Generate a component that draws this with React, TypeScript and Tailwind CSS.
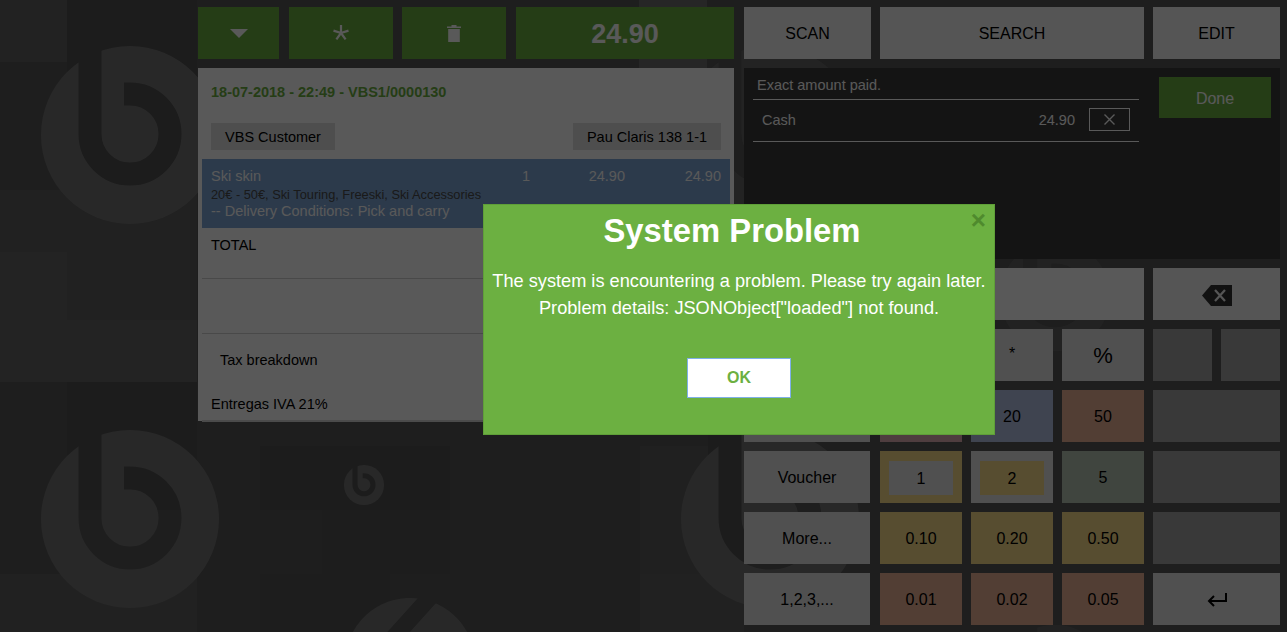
const tiles = [
  [0, 0, 67, 62, '#626262'],
  [0, 62, 67, 128, '#585858'],
  [67, 0, 130, 190, '#505050'],
  [0, 190, 197, 62, '#5e5e5e'],
  [0, 252, 67, 130, '#646464'],
  [67, 252, 130, 68, '#5e5e5e'],
  [67, 320, 130, 62, '#646464'],
  [0, 382, 67, 192, '#585858'],
  [67, 382, 130, 128, '#525252'],
  [67, 510, 130, 64, '#585858'],
  [0, 574, 197, 58, '#606060'],
  [260, 446, 190, 64, '#525252'],
  [322, 510, 128, 64, '#545454'],
  [260, 574, 130, 58, '#545454'],
  [450, 430, 190, 202, '#565656'],
  [640, 446, 68, 128, '#5c5c5c'],
  [640, 574, 104, 58, '#606060'],
  [708, 430, 36, 144, '#525252'],
  [639, 0, 68, 68, '#6e6e6e'],
  [197, 0, 442, 68, '#565656'],
];

const logos = [
  [130, 135, 1, 0, '#747474'],
  [130, 519, 1, 0, '#747474'],
  [364, 485, 0.225, 0, '#747474'],
  [770, 519, 1, 0, '#747474'],
  [770, 135, 1, 0, '#666666'],
  [410, 663, 0.73, 42, '#747474'],
  [1055, 296, 0.62, 0, '#626262'],
  [1055, 680, 0.62, 0, '#626262'],
];

function Background() {
  return (
    <svg className="absolute inset-0" width="1287" height="632" viewBox="0 0 1287 632">
      <defs>
        <mask id="logo-cut" maskUnits="userSpaceOnUse" x="-120" y="-120" width="240" height="240">
          <rect x="-120" y="-120" width="240" height="240" fill="#fff" />
          <path d="M-40 -120V-1A40 40 0 1 0 0 -41H-6" fill="none" stroke="#000" strokeWidth="23" />
        </mask>
      </defs>
      {tiles.map(([x, y, w, h, fill]) => (
        <rect key={`${x}-${y}`} x={x} y={y} width={w} height={h} fill={fill as string} />
      ))}
      {logos.map(([x, y, scale, angle, fill]) => (
        <g key={`${x}-${y}`} transform={`translate(${x} ${y}) rotate(${angle}) scale(${scale})`}>
          <circle r="89" fill={fill as string} mask="url(#logo-cut)" />
        </g>
      ))}
    </svg>
  );
}

function GreenButton({ className, children }: { className: string; children: React.ReactNode }) {
  return <div className={`flex h-[52px] items-center justify-center bg-[#6cb041] text-white ${className}`}>{children}</div>;
}

function TopActions() {
  return (
    <div className="flex h-[52px]">
      <GreenButton className="w-[81px]">
        <svg width="18" height="10" viewBox="0 0 18 10"><path d="M0 1H18L9 10Z" fill="currentColor" /></svg>
      </GreenButton>
      <GreenButton className="ml-[10px] w-[104px]">
        <svg width="18" height="18" viewBox="0 0 18 18" fill="none" stroke="currentColor" strokeWidth="2.2">
          <path d="M9 9V1M9 9L1.5 6.6M9 9L16.5 6.6M9 9L4.4 15.4M9 9L13.6 15.4" />
        </svg>
      </GreenButton>
      <GreenButton className="ml-[9px] w-[104px]">
        <svg width="14" height="17" viewBox="0 0 14 17" fill="currentColor">
          <path d="M4.5 0H9.5V1.5H14V3H0V1.5H4.5ZM1.2 4H12.8V17H1.2Z" />
        </svg>
      </GreenButton>
      <GreenButton className="ml-[10px] w-[218px] pt-[2px] text-[27px] font-bold">24.90</GreenButton>
    </div>
  );
}

function Receipt() {
  return (
    <div className="mt-[9px] h-[353px] bg-white text-[14.5px] text-black">
      <div className="flex h-[55px] items-end pb-[19px] pl-[13px] font-bold text-[#6cb041]">18-07-2018 - 22:49 - VBS1/0000130</div>
      <div className="flex justify-between px-[13px]">
        <div className="flex h-[27px] w-[124px] items-center justify-center bg-[#dfdfdf] pt-[2px]">VBS Customer</div>
        <div className="flex h-[27px] w-[148px] items-center justify-center bg-[#dfdfdf] pt-[2px]">Pau Claris 138 1-1</div>
      </div>
      <div className="mx-[4px] mt-[9px] h-[69px] bg-[#7ea6d6] px-[9px] pt-[9px] text-white">
        <div className="flex h-[18px] items-center">
          <span className="w-[275px]">Ski skin</span>
          <span className="w-[44px] text-right">1</span>
          <span className="w-[95px] text-right">24.90</span>
          <span className="w-[96px] text-right">24.90</span>
        </div>
        <div className="mt-[1px] h-[16px] text-[12.8px] leading-[16px] text-[#4a4a4a]">20€ - 50€, Ski Touring, Freeski, Ski Accessories</div>
        <div className="h-[16px] leading-[16px]">-- Delivery Conditions: Pick and carry</div>
      </div>
      <div className="mx-[4px] h-[51px] border-b border-[#d0d0d0] px-[9px] pt-[8px] leading-[18px]">TOTAL</div>
      <div className="mx-[4px] h-[55px] border-b border-[#d0d0d0]" />
      <div className="flex h-[53px] items-center pl-[22px]">Tax breakdown</div>
      <div className="mx-[4px] h-[35px] border-b-2 border-[#d8d8d8] px-[9px] pt-[8px] leading-[18px]">Entregas IVA 21%</div>
    </div>
  );
}

function Key({ children, className = 'bg-[#e5e5e5]' }: { children?: React.ReactNode; className?: string }) {
  return <div className={`flex h-[52px] items-center justify-center pt-[2px] text-base text-black ${className}`}>{children}</div>;
}

const yellow = 'bg-[#f9dc89]';
const brown = 'bg-[#eab194]';
const muted = 'bg-[#a3a3a3]';

function Keypad() {
  return (
    <div className="mt-[9px] grid grid-cols-[127px_82px_82px_82px_127px] gap-x-[9px] gap-y-[9px]">
      <Key className="w-[126px] bg-[#e5e5e5]" />
      <Key />
      <Key className="bg-[#e5e5e5] pb-[4px]">*</Key>
      <Key className="bg-[#e5e5e5] pb-[2px] text-[22px]">%</Key>
      <div className="flex justify-between">
        <Key className={`w-[59px] ${muted}`} />
        <Key className={`w-[59px] ${muted}`} />
      </div>

      <Key className="w-[126px] bg-[#e5e5e5]" />
      <Key className="bg-[#e2afb4]">10</Key>
      <Key className="bg-[#b4c2e5]">20</Key>
      <Key className={brown}>50</Key>
      <Key className={muted} />

      <Key className="w-[126px] bg-[#e5e5e5]">Voucher</Key>
      <Key className={`${yellow} pt-0`}><span className="flex h-[34px] w-[64px] items-center justify-center bg-[#e5e5e5] pt-[2px]">1</span></Key>
      <Key className="bg-[#e5e5e5] pt-0"><span className={`flex h-[34px] w-[64px] items-center justify-center pt-[2px] ${yellow}`}>2</span></Key>
      <Key className="bg-[#b7c5b4]">5</Key>
      <Key className={muted} />

      <Key className="w-[126px] bg-[#e5e5e5]">More...</Key>
      <Key className={yellow}>0.10</Key>
      <Key className={yellow}>0.20</Key>
      <Key className={yellow}>0.50</Key>
      <Key className={muted} />

      <Key className="w-[126px] bg-[#e5e5e5]">1,2,3,...</Key>
      <Key className={brown}>0.01</Key>
      <Key className={brown}>0.02</Key>
      <Key className={brown}>0.05</Key>
      <Key className="bg-[#e5e5e5] pt-0">
        <svg width="20" height="14" viewBox="0 0 20 14" fill="none" stroke="#000" strokeWidth="2">
          <path d="M19 0V8H2M7 3L2 8L7 13" />
        </svg>
      </Key>
    </div>
  );
}

function Payments() {
  return (
    <div className="mt-[9px] flex h-[191px] bg-[#393939] text-[14.5px] text-white">
      <div className="ml-[9px] w-[386px]">
        <div className="flex h-[32px] items-center border-b border-white pl-[4px] pt-[4px]">Exact amount paid.</div>
        <div className="flex h-[42px] items-center border-b border-white pl-[9px]">
          <span className="flex-1">Cash</span>
          <span>24.90</span>
          <span className="ml-[14px] mr-[9px] flex h-[23px] w-[41px] -translate-y-[1px] items-center justify-center border border-white">
            <svg width="11" height="11" viewBox="0 0 11 11" fill="none" stroke="currentColor" strokeWidth="1.4"><path d="M0.5 0.5L10.5 10.5M10.5 0.5L0.5 10.5" /></svg>
          </span>
        </div>
      </div>
      <div className="ml-[20px] mt-[9px] flex h-[41px] w-[112px] items-center justify-center bg-[#6cb041] pt-[2px] text-base">Done</div>
    </div>
  );
}

function SidePanel() {
  return (
    <div className="ml-[10px] w-[536px]">
      <div className="flex gap-[9px] text-base text-black">
        <Key className="w-[127px] bg-[#f3f3f3]">SCAN</Key>
        <Key className="w-[264px] bg-[#f3f3f3]">SEARCH</Key>
        <Key className="w-[127px] bg-[#f3f3f3]">EDIT</Key>
      </div>
      <Payments />
      <div className="mt-[9px] flex gap-[9px]">
        <Key className="w-[400px] bg-white" />
        <Key className="w-[127px] bg-[#f3f3f3] pt-0">
          <svg width="30" height="21" viewBox="0 0 30 21">
            <path d="M0 10.5L9 0H30V21H9Z" fill="#333" />
            <path d="M13 5L23 16M23 5L13 16" stroke="#f3f3f3" strokeWidth="2.2" />
          </svg>
        </Key>
      </div>
      <Keypad />
    </div>
  );
}

function ProblemDialog() {
  return (
    <div className="absolute left-[483px] top-[204px] h-[231px] w-[512px] border border-[#5f9f38] bg-[#6cb041] text-center text-white">
      <div className="absolute right-[8px] top-[2px] text-[26px] font-bold leading-[26px] text-[#4f8a2d]">×</div>
      <h2 className="pr-[14px] pt-[6px] text-[32.8px] font-bold leading-[40px]">System Problem</h2>
      <p className="mt-[17px] text-[18.2px] leading-[27px]">
        The system is encountering a problem. Please try again later.
        <br />
        Problem details: JSONObject["loaded"] not found.
      </p>
      <button type="button" className="mx-auto mt-[36px] block h-[40px] w-[104px] border border-[#7fb0e8] bg-white text-base font-bold text-[#6cb041]">
        OK
      </button>
    </div>
  );
}

export default function App() {
  return (
    <div className="relative h-[632px] w-full overflow-hidden bg-[#565656] font-['Liberation_Sans',Arial,sans-serif]">
      <Background />
      <div className="relative flex pl-[198px] pt-[7px]">
        <div className="w-[536px]">
          <TopActions />
          <Receipt />
        </div>
        <SidePanel />
      </div>
      <div className="absolute inset-0 bg-black/65" />
      <ProblemDialog />
    </div>
  );
}
